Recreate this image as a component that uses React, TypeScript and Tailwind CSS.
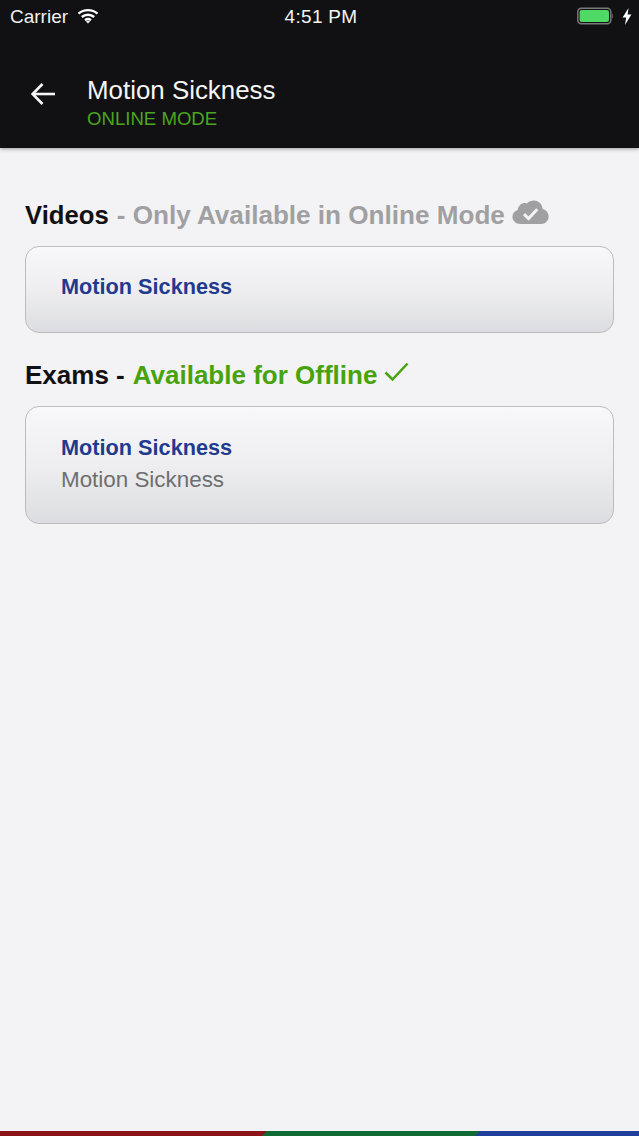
export default function App() {
  return (
    <div className="flex h-[1136px] w-full flex-col overflow-hidden bg-[#f3f3f5] font-['Liberation_Sans',Arial,sans-serif]">
      <header className="relative z-10 h-[148px] shrink-0 bg-[#111113] shadow-[0_1px_4px_rgba(0,0,0,0.35)]">
        <div className="grid h-[32px] grid-cols-3 items-center pl-[10px] pr-[7px] text-white">
          <div className="flex items-center gap-[9px]">
            <span className="text-[19px] leading-none text-[#f0f0f0]">Carrier</span>
            <svg width="22" height="16" viewBox="0 0 22 16" fill="none" stroke="#fff" strokeWidth="2.4">
              <path d="M1.500 5.600C6.800 0.900 15.200 0.900 20.500 5.600" />
              <path d="M4.800 9C8.300 5.900 13.700 5.900 17.200 9" />
              <path d="M8 12.200c1.800-1.400 4.200-1.400 6 0" />
              <path d="M11 15.600 8.900 13.300c1.200-.9 3-.9 4.200 0z" fill="#fff" stroke="none" />
            </svg>
          </div>
          <span className="text-center text-[19px] leading-none tracking-[0.3px] text-[#f5f5f5]">4:51 PM</span>
          <div className="flex items-center justify-end gap-[8px]">
            <svg width="37" height="18" viewBox="0 0 37 18">
              <rect x="0.800" y="1.200" width="33" height="15.600" rx="3.500" fill="none" stroke="#77787a" strokeWidth="1.500" />
              <rect x="2.600" y="3" width="29.400" height="12" rx="2" fill="#4cd964" />
              <path d="M35 6.500c1 .4 1 4.600 0 5z" fill="#77787a" />
            </svg>
            <svg width="10" height="17" viewBox="0 0 10 17" fill="#fff">
              <path d="M6.500 0 .6 9.600h3.600L3 17l6.400-10.400H5.600z" />
            </svg>
          </div>
        </div>
        <div className="mt-[27px] flex items-start">
          <button className="ml-[30px] mt-[24px] flex h-[22px] w-[27px] items-center" aria-label="Back">
            <svg width="26" height="24" viewBox="0 0 26 24" fill="none" stroke="#f5f5f5" strokeWidth="2.600">
              <path d="M25 12H3" />
              <path d="M12.500 2 2.600 12l9.900 10" />
            </svg>
          </button>
          <div className="ml-[30px] pt-[17px]">
            <div className="text-[25.9px] leading-[28px] text-[#f5f5f5]">Motion Sickness</div>
            <div className="mt-[3px] text-[18.6px] leading-[24px] text-[#4ca520]">ONLINE MODE</div>
          </div>
        </div>
      </header>
      <main className="flex-1 px-[25px] pt-[51px]">
        <h2 className="flex h-[32px] items-center text-[26px] font-bold leading-[32px] text-[#111113]">
          <span className="text-[25.7px]">Videos</span>
          <span className="ml-[8px] text-[26.1px] text-[#a0a0a3]">- Only Available in Online Mode</span>
          <svg className="mb-[6px] ml-[7px]" width="37" height="25" viewBox="0 0 37 25">
            <path fill="#a0a0a3" d="M8.500 24C3.800 24 .4 20.700.4 16.800c0-3.200 2.100-5.800 5.200-6.700C6.600 4.700 11 2 14.800 3.400 17 1.300 19.700.4 22 .5c4.800.2 8.300 3.600 8.700 8.600 3.600.8 5.900 3.900 5.900 7.400 0 4.200-3.300 7.500-7.500 7.500z" />
            <path fill="none" stroke="#f3f3f5" strokeWidth="3" d="M12 14.200l4.500 4.300 8.800-9.300" />
          </svg>
        </h2>
        <div className="mt-[15px] flex h-[87px] items-center rounded-[14px] border border-[#bcbcc0] bg-gradient-to-b from-[#f8f8fa] via-[#eeeef0] via-50% to-[#dcdde0] pb-[4px] pl-[35px]">
          <span className="text-[21.7px] font-bold text-[#1f3a8f]">Motion Sickness</span>
        </div>
        <h2 className="mt-[26px] flex h-[32px] items-center text-[26px] font-bold leading-[32px] text-[#111113]">
          Exams -<span className="ml-[8px] text-[#46a30c]">Available for Offline</span>
          <svg className="mb-[6px] ml-[7px]" width="25" height="20" viewBox="0 0 25 20" fill="none" stroke="#46a30c" strokeWidth="2.500">
            <path d="M1.500 10.500 8.500 17.500 23.500 1.500" />
          </svg>
        </h2>
        <div className="mt-[15px] flex h-[118px] flex-col justify-center rounded-[14px] border border-[#bcbcc0] bg-gradient-to-b from-[#f8f8fa] via-[#eeeef0] via-50% to-[#dcdde0] pb-[4px] pl-[35px]">
          <span className="text-[21.7px] font-bold leading-[33px] text-[#1f3a8f]">Motion Sickness</span>
          <span className="text-[22.4px] leading-[32px] text-[#6e6e70]">Motion Sickness</span>
        </div>
      </main>
      <div className="flex h-[5px] shrink-0 justify-between bg-[#0f6a33]">
        <div className="h-full w-[267px] bg-[#8c1418] [clip-path:polygon(0_0,100%_0,calc(100%-5px)_100%,0_100%)]" />
        <div className="h-full w-[164px] bg-[#1f3f9a] [clip-path:polygon(5px_0,100%_0,100%_100%,0_100%)]" />
      </div>
    </div>
  );
}
